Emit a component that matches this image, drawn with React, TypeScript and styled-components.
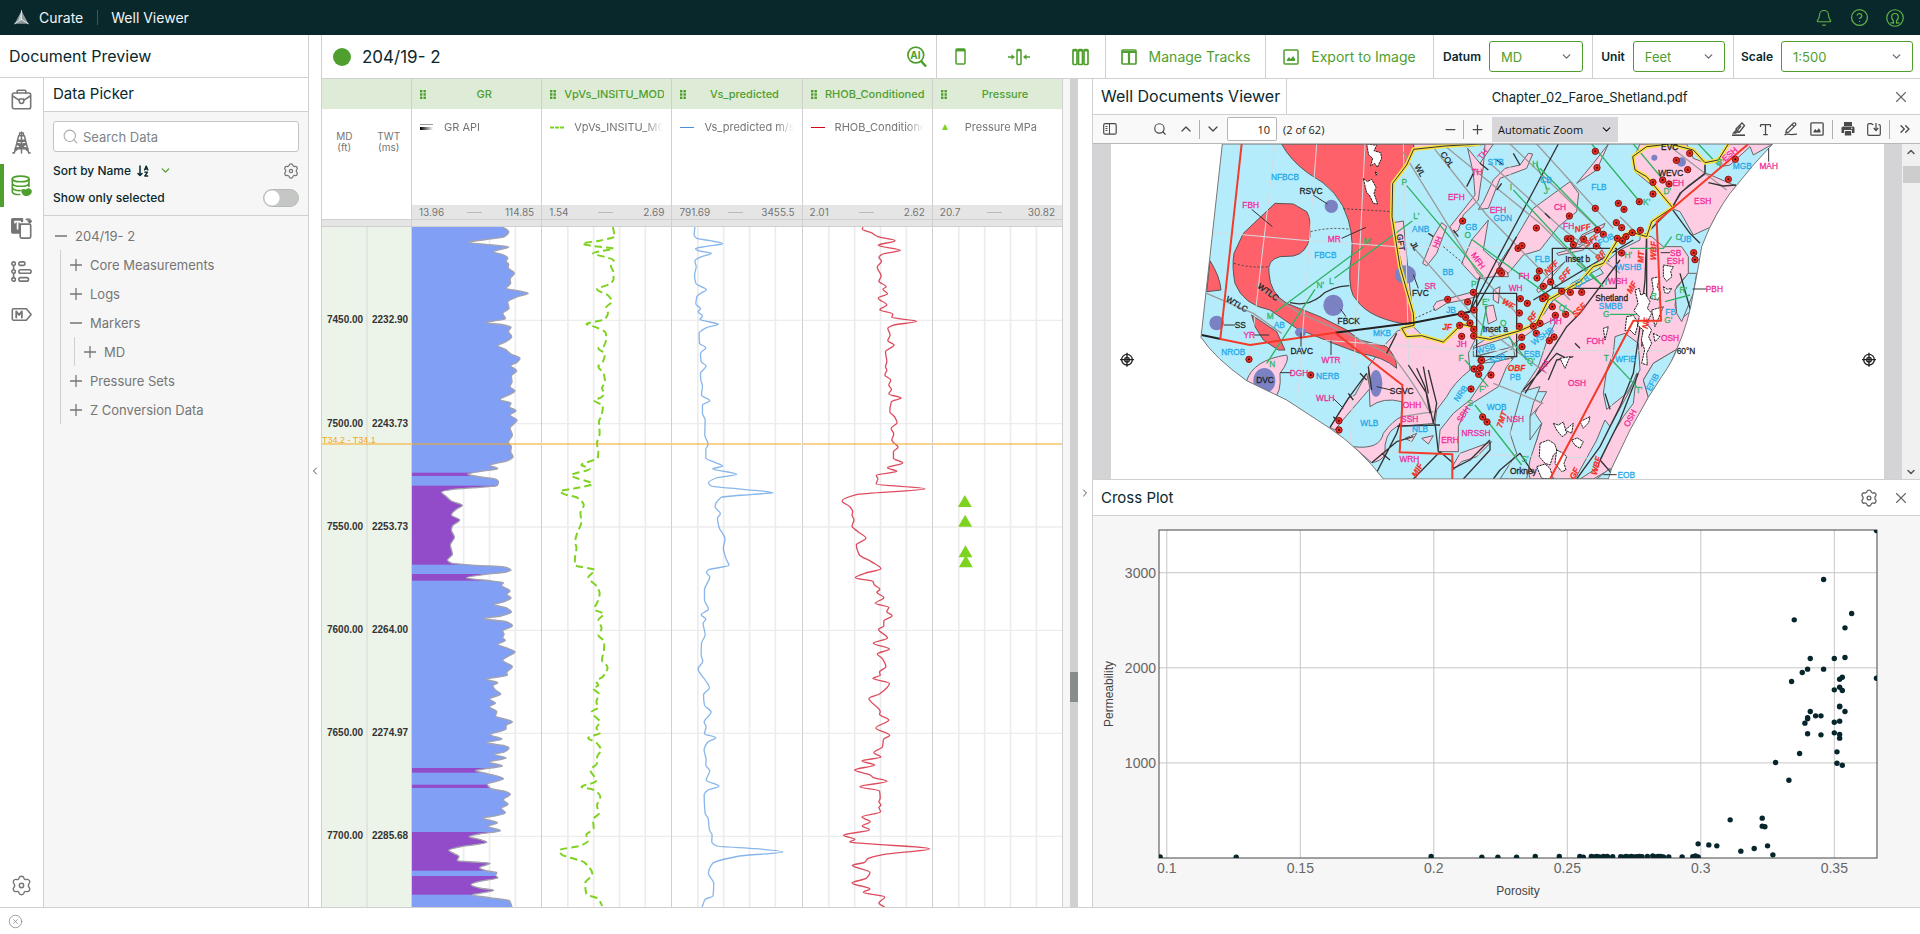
import React from "react";
import styled, { createGlobalStyle, css } from "styled-components";
import { Search, ChevronDown, ChevronUp, ChevronLeft, ChevronRight, ChevronsRight, Plus, Minus, X, Bell, CircleHelp, CircleX, Type } from "lucide-react";

const c = {
  dark: "#09282c", green: "#4f9f2f", line: "#d0d0d0", grey: "#757575", panel: "#f6f6f6",
  pale: "#deebd6", scale: "#e5e5e5", depth: "#ecf4e9",
};

const Global = createGlobalStyle`
  * { box-sizing: border-box; }
  body { margin: 0; font-family: Inter, "Open Sans", sans-serif; color: ${c.dark}; background: #fff; }
  button { font: inherit; color: inherit; background: none; border: 0; padding: 0; cursor: pointer; display: inline-flex; align-items: center; justify-content: center; }
  input, select { font: inherit; color: inherit; }
  h1, h2, p, ul { margin: 0; padding: 0; font-weight: 400; }
  ul { list-style: none; }
  svg { display: block; }
`;

const Shell = styled.div`display: flex; flex-direction: column; height: 100vh; overflow: hidden;`;
const TopBar = styled.header`
  flex: 0 0 35px; display: flex; align-items: center; background: ${c.dark}; color: #f2f5f5; font-size: 14px; padding: 0 16px 0 14px;
`;
const Brand = styled.a`display: flex; align-items: center; gap: 10px; color: inherit; text-decoration: none; padding-right: 14px; border-right: 1px solid #4b5254; line-height: 14px;`;
const AppName = styled.span`padding-left: 13px; flex: 1;`;
const TopActions = styled.div`display: flex; gap: 17px; color: #62b345;`;
const Body = styled.div`flex: 1; min-height: 0; display: flex;`;
const Footer = styled.footer`flex: 0 0 27px; border-top: 1px solid ${c.line}; display: flex; align-items: center; padding-left: 8px; color: #8a8a8a;`;

const LeftPane = styled.aside`flex: 0 0 309px; min-width: 0; border-right: 1px solid ${c.line}; display: flex; flex-direction: column;`;
const PaneTitle = styled.h1`height: 43px; line-height: 42px; padding-left: 9px; font-size: 16px; border-bottom: 1px solid ${c.line};`;
const LeftBody = styled.div`flex: 1; display: flex; min-height: 0;`;
const Rail = styled.nav`flex: 0 0 44px; border-right: 1px solid ${c.line}; display: flex; flex-direction: column;`;
const RailButton = styled.button<{ $active?: boolean; $end?: boolean }>`
  height: 43px; color: ${p => (p.$active ? c.green : c.grey)};
  box-shadow: ${p => (p.$active ? `inset 4px 0 ${c.green}` : "none")};
  ${p => p.$end && css`margin-top: auto;`}
`;
const Picker = styled.section`flex: 1; min-width: 0; background: ${c.panel}; display: flex; flex-direction: column;`;
const PickerTitle = styled.h2`flex: 0 0 34px; background: #fff; line-height: 32px; padding-left: 9px; font-size: 15px; border-bottom: 1px solid ${c.line};`;
const PickerTools = styled.div`padding: 9px 9px 4px; border-bottom: 1px solid ${c.line};`;
const SearchBox = styled.label`
  display: flex; align-items: center; gap: 4px; height: 31px; padding: 0 8px; margin-bottom: 5px; border: 1px solid #c4c4c4; border-radius: 3px; background: #fff; color: #aaa;
  input { border: 0; outline: 0; flex: 1; width: 0; min-width: 0; font-size: 13px; padding: 0; color: ${c.grey}; background: none; }
  input::placeholder { color: #7c8488; opacity: 1; }
`;
const ToolRow = styled.div`display: flex; align-items: center; justify-content: space-between; height: 27px; font-size: 12px; font-weight: 500;`;
const SortButton = styled.button`gap: 6px; font-weight: 500; svg:last-child { margin-left: 4px; color: ${c.green}; }`;
const GearButton = styled.button`color: ${c.grey};`;
const Toggle = styled.label`
  display: flex; flex: 1; align-items: center; justify-content: space-between;
  input { appearance: none; margin: 0; width: 36px; height: 18px; border-radius: 9px; border: 1px solid #b8bab9; background: radial-gradient(circle at 8px 8px, #fff 7px, #c5c7c5 8px); }
`;
const Tree = styled.ul`padding-top: 5px; color: ${c.grey}; font-size: 13px;`;
const Branch = styled.ul<{ $indent: number }>`margin-left: ${p => p.$indent}px; border-left: 1px solid ${c.line};`;
const TreeRow = styled.button<{ $root?: boolean }>`display: flex; gap: 8px; height: 29px; padding-left: ${p => (p.$root ? 11 : 9)}px; svg { stroke-width: 1.5; }`;

const Gutter = styled.button<{ $w: number }>`flex: 0 0 ${p => p.$w}px; color: #555; background: #fff; height: 100%;`;
const Main = styled.main`flex: 1; min-width: 0; border-left: 1px solid ${c.line}; display: flex; flex-direction: column;`;
const Toolbar = styled.div`flex: 0 0 44px; display: flex; border-bottom: 1px solid ${c.line}; color: ${c.green};`;
const WellName = styled.h1`display: flex; align-items: center; gap: 11px; flex: 1; padding-left: 11px; font-size: 17px; color: ${c.dark};`;
const WellDot = styled.span`width: 18px; height: 18px; border-radius: 50%; background: ${c.green};`;
const ToolCell = styled.div<{ $w?: number; $plain?: boolean; $spread?: boolean }>`
  display: flex; align-items: center; justify-content: space-evenly; ${p => p.$w && `width: ${p.$w}px;`}
  ${p => p.$spread && css`justify-content: space-between; padding: 0 16px 0 18px;`}
  border-left: ${p => (p.$plain ? "0" : `1px solid ${c.line}`)};
  > button { gap: 12px; font-size: 14px; height: 100%; white-space: nowrap; }
`;
const Field = styled.label<{ $w: number }>`
  display: flex; align-items: center; gap: 8px; position: relative; font-size: 12px; font-weight: 600; color: ${c.dark};
  select { appearance: none; width: ${p => p.$w}px; height: 31px; border: 1px solid ${c.green}; border-radius: 3px; background: #fff; padding: 0 11px; font-size: 13px; font-weight: 400; color: ${c.green}; }
  svg { position: absolute; right: 10px; color: #666f7d; pointer-events: none; }
`;

const Workspace = styled.div`flex: 1; min-height: 0; display: grid; grid-template-columns: 756fr 14px 828fr; grid-template-rows: minmax(0, 1fr);`;
const TracksPane = styled.section`display: flex; min-width: 0;`;
const Track = styled.div<{ $depth?: boolean }>`
  ${p => (p.$depth ? css`flex: 0 0 90px;` : css`flex: 1 1 0;`)}
  min-width: 0; display: flex; flex-direction: column; border-right: 1px solid ${c.line};
`;
const TrackHead = styled.div`
  flex: 0 0 30px; display: flex; align-items: center; gap: 8px; background: ${c.pale}; color: ${c.green}; padding: 0 7px 0 8px; font-size: 11px; font-weight: 500;
  span { flex: 1; text-align: center; overflow: hidden; white-space: nowrap; }
`;
const Legend = styled.div`
  flex: 0 0 96px; display: flex; align-items: flex-start; gap: 10px; padding: 9px 8px 0; font-size: 11px; line-height: 18px; color: ${c.grey};
  svg { flex: none; }
  span { overflow: hidden; white-space: nowrap; flex: 1; mask-image: linear-gradient(90deg, #000 80%, transparent); }
`;
const Range = styled.div`flex: 0 0 14px; display: flex; align-items: center; justify-content: space-between; background: ${c.scale}; color: ${c.grey}; font-size: 10px; padding: 0 7px; i { width: 15px; border-top: 1px solid #b9b9b9; }`;
const Band = styled.div`flex: 0 0 8px; background: ${c.scale}; border: solid ${c.line}; border-width: 1px 0;`;
const DepthHead = styled.div`flex: 0 0 110px; display: flex; padding-top: 22px; text-align: center; font-size: 10px; line-height: 11px; color: ${c.grey}; span { flex: 1; white-space: pre-line; }`;
const Plot = styled.svg`flex: 1 1 0; min-height: 0; width: 100%;`;
const DepthPlot = styled(Plot)`background: ${c.depth}; font: 700 10px "Liberation Sans", sans-serif;`;
const Strip = styled.div`flex: 0 0 7px; background: #f7f7f7;`;
const ScrollTrack = styled.div`flex: 0 0 8px; background: #d0d0d0; display: flex; flex-direction: column; &::before { content: ""; flex: 593; } i { flex: 0 0 30px; background: #878d8d; } &::after { content: ""; flex: 205; }`;

const RightPane = styled.section`min-width: 0; border-left: 1px solid ${c.line}; display: flex; flex-direction: column;`;
const PanelHead = styled.div`flex: 0 0 36px; display: flex; align-items: center; border-bottom: 1px solid ${c.line}; font-size: 15px; padding-right: 10px; background: #fff; color: ${c.dark}; button { color: #666; }`;
const DocTab = styled.h2`align-self: stretch; line-height: 34px; font-size: 16px; padding: 0 6px 0 8px; border-right: 1px solid ${c.line};`;
const PlotTitle = styled.h2`flex: 1; font-size: 15px; padding-left: 8px;`;
const FileName = styled.p`flex: 1; text-align: center; font-size: 13px;`;
const CrossHead = styled(PanelHead)`flex: 0 0 37px; border-top: 1px solid ${c.line};`;
const HeadActions = styled.div`display: flex; gap: 14px;`;
const PdfBar = styled.div`flex: 0 0 29px; display: flex; align-items: center; background: #f9f9fa; border-bottom: 1px solid #b8b8b8; color: #4a4a4a; font: 11px "Open Sans", sans-serif; padding: 0 2px 0 4px;`;
const PdfButton = styled.button`width: 26px; height: 26px;`;
const PdfSep = styled.i<{ $wide?: boolean }>`width: 1px; height: 19px; background: #b0b0b0; margin: 0 ${p => (p.$wide ? 2 : 0)}px;`;
const PdfGap = styled.span`width: 24px;`;
const PdfGroup = styled.div<{ $grow?: number; $end?: boolean }>`
  display: flex; align-items: center;
  ${p => p.$grow && css`flex: ${p.$grow} 1 0;`}
  ${p => p.$end && css`justify-content: flex-end;`}
`;
const PageInput = styled.input`width: 50px; height: 24px; text-align: right; padding: 0 6px; border: 1px solid #b5b5b5; border-radius: 2px; background: #fff; color: #222; margin: 0 6px 0 1px;`;
const PageCount = styled.span`color: #222;`;
const ZoomField = styled.label`position: relative; display: flex; align-items: center; margin-left: 2px; color: #111; select { appearance: none; width: 126px; height: 25px; border: 0; background: #d7d7db; padding: 0 6px; } svg { position: absolute; right: 5px; pointer-events: none; }`;
const Viewport = styled.div`flex: 335 1 0; min-height: 0; display: flex; background: #d4d4d7; padding-left: 18px;`;
const Page = styled.div`flex: 1; min-width: 0; background: #fff; margin-right: 18px; svg { width: 100%; height: 100%; }`;
const PageScroll = styled.div`flex: 0 0 18px; background: #f0f0f0; color: #555; display: flex; flex-direction: column; align-items: center; justify-content: space-between; i { width: 17px; height: 17px; background: #cdcdcd; margin: 7px 0 auto; }  button { height: 15px; }`;
const CrossPlot = styled.div`flex: 391 1 0; min-height: 0; background: ${c.panel}; svg { width: 100%; height: 100%; font-family: "Liberation Sans", sans-serif; }`;

/* ---------- icons ---------- */
const Ico = ({ s = 21, w = 1.5, children, vb = 24 }: { s?: number; w?: number; vb?: number; children: React.ReactNode }) => (
  <svg width={s} height={s} viewBox={`0 0 ${vb} ${vb}`} fill="none" stroke="currentColor" strokeWidth={w} strokeLinejoin="round" strokeLinecap="round">{children}</svg>
);
const Gear = ({ s = 15 }: { s?: number }) => (
  <Ico s={s} w={s > 18 ? 1.6 : 1.8}><path d="M9.3 3.200C9.800.8 14.200.8 14.700 3.200c.3 1.700 1.800 2.500 3.400 1.900 2.300-.8 4.500 3 2.700 4.600-1.300 1.200-1.300 3.400 0 4.600 1.800 1.600-.4 5.400-2.700 4.600-1.600-.6-3.100.2-3.400 1.900-.5 2.400-4.900 2.400-5.400 0-.3-1.700-1.800-2.500-3.400-1.900-2.300.8-4.500-3-2.700-4.600 1.300-1.200 1.300-3.400 0-4.600-1.800-1.600.4-5.400 2.700-4.600 1.600.6 3.100-.2 3.400-1.900z" /><circle cx="12" cy="12" r="2.500" /></Ico>
);
const Briefcase = () => <Ico w={1.8}><rect x="1.500" y="4.500" width="21" height="18" rx="2" /><path d="M7 4.500V2.500a1 1 0 0 1 1-1h8a1 1 0 0 1 1 1v2M2 8l7.500 5M22 8l-7.500 5" /><path d="M9.500 11.500h5v2.500a2.500 2.500 0 0 1-5 0z" /></Ico>;
const Derrick = () => <Ico s={23} w={1.5}><path d="M9 5 4.500 23M15 5l4.500 18M9 5h6M10 5V2h4v3M12 1v22M8 9.500h8M7 14h10M8 9.500l9 4.500M16 9.500 7 14l11 4.500M17 14 6 18.500M3 23l9-8 9 8M5 18.500h14" /></Ico>;
const Database = () => <Ico w={1.900}><ellipse cx="11" cy="4.500" rx="9.500" ry="3.200" /><path d="M1.500 4.500v14.500c0 1.800 3.500 3.200 8.500 3.300M20.500 4.500V13M1.500 9.500c1 4.500 18 4.500 19 0M1.500 14.500c.8 2.500 5 3.300 9 3.300" /><path fill="currentColor" d="M12.500 17.500c2-1.500 4 0 4.800.6.800-2.600 4-2.800 5.200-.600 1 2.200-.5 5-4.700 5.700-3 .2-5-2.700-5.300-5.700z" /></Ico>;
const Template = () => <Ico w={1.900}><path d="M10 17H2a1 1 0 0 1-1-1V2a1 1 0 0 1 1-1h11v3h-2.500v13z" fill="currentColor" /><path d="M4.500 5.500V4h6v1.500M7.500 4v8.500" stroke="#fff" /><rect x="10.500" y="7" width="12" height="16" rx="1.500" fill="#fff" /><path d="M17.500 1.500h4V5m-1.800-1.500L21.500 5.200 23.200 3.500" /></Ico>;
const ListNodes = () => <Ico w={1.800}><path d="M3 5.500v4M3 14.500v4.500" /><circle cx="3" cy="3" r="2" /><circle cx="3" cy="12" r="2" /><circle cx="3" cy="21" r="2" /><rect x="9" y="1" width="7" height="4" rx="2" /><rect x="9" y="10" width="14" height="4" rx="2" /><rect x="9" y="19" width="11" height="4" rx="2" /></Ico>;
const TagM = () => <Ico w={1.800}><path d="M3 5.500h14.500L23 12l-5.500 6.500H3A1.500 1.500 0 0 1 1.500 17V7A1.500 1.500 0 0 1 3 5.500z" /><path d="M6 15.500v-7l3.200 4 3.200-4v7" strokeWidth="2.100" /></Ico>;
const Logo = () => <Ico s={15} w={1}><path d="M12 1 1 22h22z" fill="#8d9c9e" stroke="none" /><path d="M12 1v14M12 15 1 22M12 15l11 7" stroke="#e9eeee" strokeWidth="1.500" /><path d="m12 1-5 17 5-4z" fill="#c9d1d2" stroke="none" /></Ico>;
const SortAZ = () => <Ico s={12} vb={12} w={1.500}><path d="M3 1v9.500M1 8.500l2 2 2-2" /><path d="M7.500 5 9.200 1l1.700 4M8 4h2.500M7.800 7.200h2.700l-2.700 3.800h2.900" strokeWidth="1.300" /></Ico>;
const AiSearch = () => (
  <svg width="20" height="22" viewBox="0 0 20 22" fill="none" stroke="currentColor" strokeWidth="1.700"><circle cx="8.800" cy="9" r="7.900" /><path d="m14 15 5 5.500" strokeWidth="2.600" /><text x="8.500" y="12.500" fontSize="10" fontWeight="700" fill="currentColor" stroke="none" textAnchor="middle">AI</text></svg>
);
const SingleTrack = () => <svg width="11" height="17" fill="none" stroke="currentColor" strokeWidth="1.500"><rect x="1" y="1" width="9" height="15" rx="1" /><path d="M1 2.200h9" strokeWidth="2.500" /></svg>;
const FitTrack = () => <svg width="22" height="18" fill="none" stroke="currentColor" strokeWidth="1.500"><rect x="9" y="1.500" width="4" height="15" rx="1" /><path d="M9 2.500h4M0 9h6M22 9h-6" /><path d="M3.500 6.200v5.600L7 9zM18.500 6.200v5.600L15 9z" fill="currentColor" stroke="none" /></svg>;
const MultiTrack = () => <svg width="17" height="18" fill="none" stroke="currentColor" strokeWidth="1.700">{[1, 6.500, 12].map(x => <g key={x}><rect x={x} y="1.500" width="4" height="15" rx="1" /><path d={`M${x} 2.500h4`} strokeWidth="2" /></g>)}</svg>;
const TableIcon = () => <svg width="16" height="16" fill="none" stroke="currentColor" strokeWidth="1.700"><rect x="1" y="1" width="14" height="14" rx="1" /><path d="M1 3h14M8 3v12" strokeWidth="2.200" /></svg>;
const PictureIcon = ({ s = 16 }: { s?: number }) => <svg width={s} height={s} viewBox="0 0 16 16" fill="none" stroke="currentColor" strokeWidth="1.500"><rect x="1" y="1" width="14" height="14" rx="1" /><path d="M4 12v-1.500l2-2.500 1.700 2L10.200 7 12 10v2z" fill="currentColor" stroke="none" /></svg>;
const UserIcon = () => <Ico s={18} w={1.600}><circle cx="12" cy="12" r="11" /><path d="M9 18.500H6.500M15 18.500h2.500M10 19v-3C6 12.500 7 6 12 6s6 6.500 2 10v3" /></Ico>;
const Grip = () => <svg width="6" height="9" fill={c.green}>{[0, 3.500].map(x => [0, 3.300, 6.600].map(y => <rect key={`${x}${y}`} x={x} y={y} width="2.400" height="2.400" />))}</svg>;
const SidebarIcon = () => <svg width="14" height="12" fill="none" stroke="currentColor"><rect x=".7" y=".7" width="12.500" height="10.500" rx="1.500" strokeWidth="1.200" /><path d="M6.500 1v10" /><path d="M2.500 3.500h2M2.500 5.500h2M2.500 7.500h2" /></svg>;
const Highlighter = () => <svg width="14" height="14" viewBox="0 0 14 14" fill="none" stroke="currentColor" strokeWidth="1.300"><path d="M0 13.200h13" strokeWidth="1.600" /><path d="m4 7 6-6 2.500 2.500-5 6.500-3.500.2zM4 7l3.300 3.300M3.500 9 1.500 11.200h3M6 7.500 9 4" /></svg>;
const Signature = () => <svg width="14" height="14" viewBox="0 0 14 14" fill="none" stroke="currentColor" strokeWidth="1.200"><path d="m2.500 8 7-7c1.500-.8 2.900.8 2 2.200l-7 7-2.700.5zM.5 13c2-1.500 4-.8 6-.5s4-.3 6.500-.3M8 2.500 10 4.500" /></svg>;
const PrintIcon = () => <svg width="14" height="14" fill="currentColor"><path d="M3 0h8v4H3zM2 4.500h10a1.500 1.500 0 0 1 1.500 1.500v5H11V8H3v3H.5V6A1.500 1.500 0 0 1 2 4.500zM3.800 9h6.400v4.500H3.800z" /><circle cx="10.800" cy="6.300" r=".7" fill="#fff" /></svg>;
const SaveIcon = () => <svg width="14" height="13" fill="none" stroke="currentColor" strokeWidth="1.200"><path d="M6.500 1.500H5.500L4.500.7H2A1.300 1.300 0 0 0 .7 2v9A1.300 1.300 0 0 0 2 12.300h10a1.300 1.300 0 0 0 1.300-1.300V3A1.300 1.300 0 0 0 12 1.700h-.5M9 0v7M6.700 5 9 7.500 11.300 5" /></svg>;

/* ---------- well log curves ---------- */
type Pt = [number, number];
/* Builds pairs from a flat "x,y x,y" listing. */
const pts = (s: string): Pt[] => s.trim().split(/\s+/).map(p => p.split(",").map(Number) as Pt);

/* Monotone cubic interpolation along depth (y). */
function smooth(p: Pt[]): string {
  const n = p.length, h: number[] = [], s: number[] = [], m: number[] = [];
  for (let i = 0; i < n - 1; i++) { h.push(p[i + 1][1] - p[i][1]); s.push((p[i + 1][0] - p[i][0]) / h[i]); }
  for (let i = 0; i < n; i++) {
    if (i === 0) m.push(s[0]);
    else if (i === n - 1) m.push(s[n - 2]);
    else m.push(s[i - 1] * s[i] <= 0 ? 0 : (2 * s[i - 1] * s[i]) / (s[i - 1] + s[i]));
  }
  let d = `M${p[0]}`;
  for (let i = 0; i < n - 1; i++) d += `C${p[i][0] + (m[i] * h[i]) / 3},${p[i][1] + h[i] / 3} ${p[i + 1][0] - (m[i + 1] * h[i]) / 3},${p[i + 1][1] - h[i] / 3} ${p[i + 1]}`;
  return d;
}

const GR = pts(`580,21 598,35 585,50 520,60 476,67 540,74 598,81 575,88 552,95 580,104 595,114 590,124 598,133 596,142 615,160 602,178 604,190 590,205 625,212 657,220 625,230 595,246 599,265 580,280 588,296 560,302 527,308 580,314 605,322 597,334 607,350 590,365 565,377 588,388 605,402 632,415 622,428 604,437 622,452 606,468 608,485 602,500 617,513 600,524 572,539 605,549 600,560 620,572 602,585 623,600 602,625 609,645 597,667 606,680 604,695 611,710 595,722 560,730 540,736 565,746 530,752 490,758 474,763 510,770 560,778 567,785 563,797 510,802 430,808 395,816 408,828 425,843 458,856 440,868 425,885 450,900 428,918 425,930 434,952 422,975 428,1003 413,1020 425,1029 500,1036 580,1040 605,1050 590,1056 530,1063 470,1074 520,1080 582,1088 576,1096 602,1113 592,1123 605,1134 585,1145 554,1154 590,1163 606,1176 575,1188 522,1196 590,1205 609,1217 580,1233 584,1243 580,1253 588,1261 565,1273 595,1285 617,1296 598,1308 580,1321 609,1340 592,1358 594,1366 560,1372 530,1378 565,1388 550,1397 557,1409 574,1422 540,1437 558,1449 540,1460 562,1475 558,1488 590,1498 609,1505 590,1517 590,1527 543,1544 578,1557 532,1568 585,1577 599,1583 585,1596 554,1603 590,1614 540,1626 579,1638 530,1646 498,1652 530,1660 582,1676 560,1684 533,1692 545,1706 590,1715 603,1722 582,1740 596,1753 575,1765 588,1778 550,1789 520,1794 564,1808 535,1819 573,1832 510,1842 478,1850 510,1858 532,1867 450,1881 417,1891 432,1900 448,1910 442,1922 510,1927 542,1930 510,1943 530,1952 562,1958 558,1966 565,1973 510,1984 484,1994 510,2004 553,2011 510,2020 488,2024 540,2033 600,2042 608,2061`);
const VP = pts(`910,21 914,40 918,48 870,62 818,71 850,78 912,86 880,92 850,100 890,112 912,120 904,138 911,155 912,178 900,192 862,208 895,226 907,245 890,262 895,280 885,298 830,312 860,322 888,338 890,355 883,378 866,385 886,402 880,425 866,440 882,460 886,485 877,505 884,520 875,532 853,541 880,558 876,585 868,605 870,640 862,670 866,695 864,714 815,735 840,746 784,766 848,792 800,804 750,815 765,823 802,833 822,855 812,880 815,905 802,940 796,965 800,985 796,1010 795,1035 855,1050 836,1072 862,1100 870,1120 866,1140 854,1168 883,1182 866,1200 876,1225 866,1245 884,1265 883,1290 877,1320 894,1342 880,1370 860,1384 866,1396 850,1405 868,1422 860,1446 866,1462 846,1476 871,1507 860,1524 872,1538 835,1554 860,1568 874,1590 862,1612 862,1630 842,1650 860,1682 852,1688 815,1700 850,1709 872,1730 862,1757 868,1780 850,1798 852,1825 830,1845 835,1862 815,1876 748,1891 755,1903 825,1928 848,1962 826,1990 830,2022 865,2036 878,2058`);
const VS = pts(`1155,21 1153,45 1160,55 1200,62 1239,71 1190,79 1157,86 1165,92 1205,100 1175,110 1155,123 1159,140 1154,165 1158,190 1175,200 1190,209 1175,218 1161,230 1158,252 1172,266 1165,275 1178,288 1170,298 1200,306 1226,313 1190,323 1168,340 1169,370 1188,383 1172,400 1174,425 1189,438 1172,460 1173,480 1178,497 1175,525 1200,542 1178,555 1178,580 1186,600 1185,645 1195,673 1188,688 1188,714 1215,727 1239,738 1209,747 1255,756 1281,763 1220,774 1196,788 1205,798 1300,808 1391,818 1330,823 1235,832 1216,860 1232,881 1223,895 1228,922 1246,957 1241,985 1251,1020 1258,1036 1195,1050 1190,1058 1200,1070 1184,1110 1184,1140 1196,1168 1174,1184 1188,1197 1180,1210 1186,1245 1175,1270 1174,1305 1179,1323 1165,1347 1186,1380 1199,1403 1181,1425 1184,1455 1204,1476 1183,1506 1189,1520 1184,1541 1218,1553 1194,1566 1183,1590 1189,1620 1188,1635 1200,1653 1189,1680 1228,1699 1195,1710 1183,1725 1186,1780 1195,1795 1199,1830 1207,1845 1206,1865 1222,1878 1340,1886 1421,1896 1290,1908 1208,1931 1196,1960 1212,1990 1210,2028 1186,2038 1177,2061`);
const RHOB = pts(`490,21 488,28 515,38 535,50 587,62 536,76 603,91 550,102 538,112 546,124 533,142 545,168 538,184 560,200 550,208 564,221 536,234 562,255 541,269 580,282 577,292 652,304 580,316 565,325 572,345 565,362 584,375 558,395 562,425 558,440 562,450 556,465 574,480 568,495 576,508 568,522 605,534 576,545 571,575 585,590 593,608 575,625 583,642 577,660 596,682 582,695 582,715 610,729 564,743 592,754 530,766 535,776 530,792 677,806 470,824 427,843 450,860 459,875 457,885 463,900 457,918 475,935 499,955 470,975 478,1003 515,1025 544,1046 495,1060 467,1073 520,1084 524,1094 541,1108 532,1117 553,1133 527,1150 568,1162 562,1175 578,1187 553,1203 553,1218 537,1228 564,1254 521,1270 570,1287 533,1302 548,1315 559,1340 540,1356 542,1366 520,1375 570,1390 540,1422 508,1435 542,1475 540,1483 568,1500 529,1524 571,1546 552,1558 549,1580 523,1598 544,1611 487,1623 525,1635 465,1650 512,1665 520,1672 563,1684 481,1700 540,1713 542,1735 538,1745 544,1755 538,1762 543,1775 487,1791 512,1805 488,1818 510,1829 431,1846 466,1858 450,1866 500,1871 691,1886 550,1904 505,1916 495,1927 458,1936 511,1957 500,1975 457,1989 511,2007 491,2017 556,2031 538,2049 555,2061`);

const GRID_Y = [301, 611, 921, 1231, 1540, 1849];
const MARKER_Y = 672;
const Grid = ({ x }: { x: number }) => (
  <g stroke="#ececec" strokeWidth="5">
    {[1, 2, 3, 4].map(i => <path key={i} d={`M${x + i * 78} 21V2061`} />)}
    {GRID_Y.map(y => <path key={y} d={`M${x} ${y}h390`} strokeWidth="4" />)}
  </g>
);
const TrackPlot = ({ x, children }: { x: number; children: React.ReactNode }) => (
  <Plot viewBox={`${x} 21 390 2040`} preserveAspectRatio="none">
    <Grid x={x} />
    {children}
    <path d={`M${x} ${MARKER_Y}h390`} stroke="#f5a623" strokeWidth="6" opacity=".5" />
  </Plot>
);
const SAND = [[758, 768], [797, 1034], [1062, 1082], [1644, 1658], [1694, 1704], [1836, 1952], [1968, 2024]];
const GrFill = () => (
  <>
    <clipPath id="gr"><path d={`${smooth(GR)}L306,2061L306,21Z`} /></clipPath>
    <g clipPath="url(#gr)">
      <rect x="306" y="21" width="390" height="2040" fill="#829ff6" />
      {SAND.map(([a, b]) => <rect key={a} x="306" y={a} width="390" height={b - a} fill="#924cca" />)}
    </g>
    <path d={smooth(GR)} fill="none" stroke="#a3a3ad" strokeWidth="4" />
  </>
);
const Curve = ({ p, color, dash, o = 1, w = 4 }: { p: Pt[]; color: string; dash?: string; o?: number; w?: number }) => (
  <path d={smooth(p)} fill="none" stroke={color} strokeWidth={w} strokeDasharray={dash} opacity={o} />
);

const lineKey = (color: string, dash?: string) => <svg width="14" height="18"><path d="M0 9.500h14" stroke={color} strokeWidth={dash ? 2 : 1} strokeDasharray={dash} /></svg>;
const TRACKS = [
  { name: "GR", legend: "GR API", lo: "13.96", hi: "114.85", key: <svg width="14" height="18"><defs><linearGradient id="k"><stop stopColor="#000" /><stop offset="1" stopColor="#fff" /></linearGradient></defs><path d="M0 6.500h13" stroke="#999" /><rect y="9" width="13" height="3" fill="url(#k)" /></svg>, plot: <TrackPlot x={306}><GrFill /></TrackPlot> },
  { name: "VpVs_INSITU_MODEL", legend: "VpVs_INSITU_MODEL", lo: "1.54", hi: "2.69", key: lineKey("#7ed321", "4 1"), plot: <TrackPlot x={696}><Curve p={VP} color="#7ed321" dash="22 12" w={6} /></TrackPlot> },
  { name: "Vs_predicted", legend: "Vs_predicted m/s", lo: "791.69", hi: "3455.5", key: lineKey("#4a90e2"), plot: <TrackPlot x={1086}><Curve p={VS} color="#4a90e2" o={0.65} /></TrackPlot> },
  { name: "RHOB_Conditioned", legend: "RHOB_Conditioned", lo: "2.01", hi: "2.62", key: lineKey("#d0021b"), plot: <TrackPlot x={309}><Curve p={RHOB} color="#d0021b" o={0.7} /></TrackPlot> },
  { name: "Pressure", legend: "Pressure MPa", lo: "20.7", hi: "30.82", key: <svg width="14" height="18"><path d="m4 6 3 6H1z" fill="#7ed321" /></svg>, plot: <TrackPlot x={699}>{[[795, 861], [796, 920], [797, 1012], [798, 1042]].map(([x, y]) => <path key={y} d={`M${x} ${y - 36}l21 36h-42z`} fill="#7ed321" />)}</TrackPlot> },
];
const DEPTHS = [["7450.00", "2232.90"], ["7500.00", "2243.73"], ["7550.00", "2253.73"], ["7600.00", "2264.00"], ["7650.00", "2274.97"], ["7700.00", "2285.68"]];
const pct = (y: number) => `${((y - 21) / 2040) * 100}%`;

/* ---------- cross plot ---------- */
const SAMPLES = pts(`346,2929 356.5,2571 335,2504 354,2420 341,2098 350,2098 354,2108 340,1986 346,1986 338,1950 334,1856 353,1901 352,1880 365.8,1890 352,1796 350,1768 353,1761 352,1597 352,1590 341,1540 354,1540 343,1495 345,1495 340,1474 340,1463 339,1418 350,1428 352,1439 340,1306 345,1295 350,1316 352,1299 352,1260 351,1116 337,1099 328,1004 351,997 353,976 333,818 311,401 323,419 323,335 324,328 299,149 303,138 306,128 320,100 325,128 315,72 327,33 365.8,3444 97.500,10 126,8 199,15 218,8 224,8 231,8 238,15 247,15 254.700,15 256,9 259,17 260,12 261,15 262,10 264,12 265,15 267,14 270,14 272,16 273,12 274,15 276,13 278,14 280,15 282,22 284,15 286,12 288,12 293,12 297,14 298,22 299,10 283,12 285,16 275,11 277,15 263.500,15 271,9`);
const px = (p: number) => 73.8 + (p - 100) * 2.670;
const py = (k: number) => 342 - k * 0.0951;
const CrossPlotChart = () => (
  <svg viewBox="0 0 827 391">
    <clipPath id="frame"><rect x="66" y="14" width="718" height="328" /></clipPath>
    <rect x="66" y="14" width="718" height="328" fill="#fff" />
    <g stroke="#c6c6c6" fill="none">
      {[100, 150, 200, 250, 300, 350].map(v => <path key={v} d={`M${px(v)} 14V342`} />)}
      {[1000, 2000, 3000].map(v => <path key={v} d={`M66 ${py(v)}H784`} />)}
    </g>
    <rect x="66" y="14" width="718" height="328" fill="none" stroke="#444" />
    <g clipPath="url(#frame)" fill="#06262b">{SAMPLES.map(([p, k], i) => <circle key={i} cx={px(p)} cy={py(k)} r="2.700" />)}</g>
    <g fontSize="14" fill="#666">
      {[100, 150, 200, 250, 300, 350].map(v => <text key={v} x={px(v)} y="357" textAnchor="middle">{v / 1000}</text>)}
      {[1000, 2000, 3000].map(v => <text key={v} x="63" y={py(v) + 5} textAnchor="end">{v}</text>)}
    </g>
    <g fontSize="12" fill="#444"><text x="425" y="379" textAnchor="middle">Porosity</text><text transform="translate(20 178) rotate(-90)" textAnchor="middle">Permeability</text></g>
  </svg>
);

/* ---------- geological map ---------- */
const B = "#22a7e8", P = "#f02a96", G = "#2fb463", K = "#222", R = "#f3301f";
type Label = [string, number, number, string, number?];
const LABELS: Label[] = [
  ["NFBCB", 555, 112, B], ["RSVC", 633, 152, K], ["FBH", 452, 194, P], ["MR", 703, 296, P], ["M'", 803, 304, G], ["FBCB", 676, 346, B], ["L", 694, 423, G], ["N'", 661, 436, G],
  ["WTLC", 505, 456, K, 36], ["WTLC", 411, 492, K, 30], ["M", 511, 528, G], ["AB", 538, 555, B], ["SS", 421, 555, K], ["YR", 448, 586, P], ["DAVC", 605, 632, K], ["WTR", 693, 660, P], ["NROB", 400, 637, B],
  ["N", 517, 673, G], ["DGH", 597, 698, P], ["NERB", 683, 709, B], ["DVC", 495, 720, K], ["WLH", 676, 773, P], ["WLB", 808, 849, B], ["SGVC", 905, 754, K], ["OHH", 936, 795, P], ["SSH", 929, 838, P],
  ["NLB", 960, 867, B], ["ERH", 1050, 901, P], ["WRH", 928, 958, P], ["MIF", 952, 990, R, -62], ["NRSSH", 1128, 878, P], ["FBCK", 746, 542, K], ["MKB", 846, 580, B], ["FVC", 961, 460, K], ["SR", 991, 439, P],
  ["JB", 1053, 510, B], ["JF", 1041, 560, R], ["JH", 1085, 612, P], ["BB", 1044, 397, B], ["ANB", 962, 266, B], ["L'", 949, 228, G], ["P", 913, 127, G], ["WL", 960, 91, K, 60], ["COL", 1042, 58, K, 56], ["JL", 945, 318, K, 60],
  ["GFT", 903, 307, K, 82], ["HH", 1012, 306, P, -68], ["EFH", 1069, 172, P], ["TH", 1131, 97, P], ["TH", 1148, 42, P, -50], ["STB", 1187, 67, B], ["EFH", 1194, 211, P], ["GDN", 1208, 235, B], ["GB", 1114, 260, B], ["O", 1103, 286, G],
  ["MFH", 1135, 362, P, 55], ["P'", 1124, 432, G], ["WH", 1247, 443, P], ["E'", 1157, 486, G], ["WF", 1226, 491, R, 30], ["Q", 1210, 549, G], ["Inset a", 1186, 567, K], ["WSB", 1158, 626, B, -15], ["SSB", 1192, 655, B, -15],
  ["F", 1083, 654, G], ["OBF", 1250, 683, R], ["PB", 1246, 712, B], ["F'", 1148, 748, G], ["NRB", 1082, 760, B, -55], ["S", 1111, 790, G], ["SBH", 1090, 822, P, -55], ["WOB", 1190, 802, B], ["7MT", 1205, 838, R, -70], ["NSH", 1246, 836, P],
  ["H", 1306, 73, G], ["CB", 1338, 121, B], ["I", 1233, 140, G], ["J'", 1340, 152, G], ["CH", 1380, 202, P], ["FLB", 1497, 141, B], ["FH", 1406, 258, P], ["NFF", 1448, 264, R, -12], ["SFF", 1475, 300, R, -38], ["FOB", 1518, 298, B, -28],
  ["EVC", 1709, 22, K], ["WEVC", 1712, 100, K], ["EH", 1735, 128, P], ["D'", 1702, 154, G], ["K'", 1640, 185, G], ["B'", 1861, 66, G], ["ESH", 1889, 42, P, -40], ["MGB", 1927, 79, B], ["MAH", 2006, 79, P], ["ESH", 1808, 183, P],
  ["C'", 1738, 290, G], ["UB", 1757, 298, B], ["SB", 1727, 338, P], ["WBF", 1660, 332, R, -88], ["MT", 1622, 351, R, -88], ["ESH", 1726, 364, P], ["RF", 1501, 347, R, -50], ["Inset b", 1433, 357, K], ["FLB", 1327, 357, B],
  ["NFF", 1354, 382, R, -42], ["SFF", 1395, 404, R, -50], ["FH", 1272, 409, P], ["CLB", 1446, 424, B, -35], ["WSHB", 1587, 381, B], ["I'", 1520, 426, G], ["WSH", 1553, 424, P], ["MF", 1595, 442, R, -60], ["Shetland", 1535, 473, K],
  ["SMBB", 1532, 497, B], ["G", 1519, 521, G], ["H'", 1585, 346, G], ["R", 1661, 468, G], ["R'", 1750, 451, G], ["PBH", 1843, 447, P], ["Q'", 1388, 505, G], ["SSF", 1437, 510, R, -45], ["RF", 1297, 530, R, -55], ["HH", 1367, 543, P],
  ["WSHB", 1327, 588, B, -35], ["FOH", 1486, 604, P], ["FB", 1712, 517, B], ["G'", 1705, 541, G], ["OSH", 1710, 594, P], ["NF", 1637, 550, R, -80], ["60°N", 1758, 634, K], ["ESB", 1296, 641, B], ["Q'", 1293, 664, G], ["PH", 1333, 677, P, -60],
  ["T", 1519, 653, G], ["WFIB", 1577, 656, B], ["OSH", 1431, 730, P], ["T'", 1617, 751, G], ["EFIB", 1657, 726, B, -62], ["OSH", 1590, 834, P, -62], ["S'", 1275, 958, G], ["Orkney", 1270, 994, K], ["WBF", 1488, 977, R, -75], ["GF", 1423, 1000, R, -65], ["EOB", 1579, 1004, B],
];
const WELLS = pts(`447,658 632,705 717,842 717,870 1088,243 1043,478 1103,486 1120,457 1122,510 1084,522 1097,532 1110,549 1079,556 1121,568 1085,589 1121,588 1143,661 1122,687 1141,683 1136,703 1173,705 1113,747 1148,831 1161,846 1199,393 1205,400 1486,34 1491,83 1486,205 1555,190 1572,208 1618,185 1549,248 1565,263 1597,278 1621,271 1578,290 1552,295 1567,303 1565,339 1489,318 1492,270 1510,283 1451,298 1402,296 1413,296 1420,314 1408,228 1309,264 1254,325 1266,317 1318,393 1311,414 1330,439 1352,426 1385,454 1411,457 1445,457 1336,470 1328,476 1261,476 1282,490 1258,519 1357,500 1366,526 1397,523 1258,559 1300,559 1320,550 1309,580 1265,592 1266,620 1348,602 1362,591 1729,61 1769,40 1763,89 1688,120 1707,132 1659,127 1659,162 1906,58 1885,118 1781,338 1785,359 1145,661`);
const MEDIAN = "M1140 12 1035 18 941 28 920 75 878 130 876 230 900 380 940 520 942 556 905 565 920 590 965 587 1030 606 1085 553 1120 560 1125 590 1170 598 1260 572 1310 550 1330 510 1345 480 1440 425 1480 380 1510 370 1550 305 1590 275 1640 290 1655 245 1718 203 1640 110 1605 90 1598 50 1640 20 1710 12 1780 30 1815 68 1855 60 1885 12";
const COAST = "M367 12 303 592Q345 655 440 722L560 780 690 865Q780 925 850 1017H1525L1535 985 1590 870 1645 772 1685 710Q1720 660 1730 628 1765 550 1780 460L1795 380 1805 320 1828 265Q1870 180 1908 138L1960 75 2018 12Z";
const Target = ({ x, y }: { x: number; y: number }) => <g stroke="#222" strokeWidth="4" fill="none"><circle cx={x} cy={y} r="16" /><circle cx={x} cy={y} r="7" /><path d={`M${x - 21} ${y}h42M${x} ${y - 21}v42`} /></g>;

const GeoMap = () => (
  <svg viewBox="33 12 2319 1005" preserveAspectRatio="xMidYMin slice" role="img" aria-label="Structural elements map">
    <clipPath id="land"><path d={COAST} /></clipPath>
    <g clipPath="url(#land)" strokeLinejoin="round">
      <rect x="300" y="12" width="1720" height="1005" fill="#b5ecfb" />
      {/* platforms and highs */}
      <g fill="#fecce3" stroke="#666" strokeWidth="3">
        <path d="M893 572 940 560 975 595 1030 606 1085 555 1120 565 1125 600 1105 640 1110 690Q1060 730 1040 770L1010 810 1005 850 890 860Q850 880 855 945 840 965 815 968L760 920Q840 930 850 880 880 840 905 830L905 785Q850 770 810 800L805 680 850 620Z" />
        <path d="M440 722Q460 660 560 645 570 660 540 700 545 760 520 775Z" />
        <path d="M800 700 810 745 720 850 705 870 690 862 745 775 765 765Z" />
        <path d="M941 30 941 12 1160 12 1100 20 1035 18Z" />
        <path d="M880 248 910 243 925 400 940 540 925 520 905 400Z" />
        <path d="M1103 25 1140 70 1180 12 1155 12 1150 80 1145 110 1135 180 1090 225 1075 270 1060 280 1050 260 1090 210 1125 165 1120 100Z" />
        <path d="M1025 248 1040 260 1010 340 980 378 968 370 1000 290Z" />
        <path d="M1085 370 1115 300 1165 240 1150 330 1220 390 1225 410 1180 410 1130 418Z" />
        <path d="M1285 40 1298 42 1280 85 1200 115 1165 205 1135 208 1150 185 1180 120 1215 85 1260 75Z" />
        <path d="M1195 375 1250 290 1300 205 1410 125 1436 160 1430 215 1375 260 1320 330 1270 345 1225 400Z" />
        <path d="M1000 500 1010 485 1110 458 1130 470 1090 480 1040 490 1005 512Z" />
        <path d="M1525 12 1490 90 1430 130 1455 100 1480 70Z" />
        <path d="M1430 310 1445 285 1515 250 1510 262 1455 285 1440 315Z" />
        <path d="M1370 340 1440 320 1480 295 1450 330 1375 346Z" />
        <path d="M1310 450 1335 415 1395 365 1360 405 1340 440 1315 458Z" />
        <path d="M1620 12 1598 60 1605 95 1660 140 1718 200 1760 140 1815 100 1815 68 1780 55 1760 12Z" />
        <path d="M1715 205 1750 150 1820 100 1908 138 1855 215 1830 262 1780 285 1740 215Z" />
        <path d="M1860 50 1885 12 2018 12 1960 45 1950 20 1890 75 1860 80Z" />
        <path d="M1170 590 1260 575 1330 525 1360 480 1480 400 1560 330 1620 300 1620 285 1655 290 1690 320 1745 320 1765 350 1765 400 1730 440 1725 500 1745 535 1790 500 1730 628 1660 670 1630 720 1645 772 1535 985 1480 1017 1290 1017 1280 970 1310 900 1325 850 1305 820 1340 755 1265 755 1315 680 1345 590 1375 530 1300 570 1230 620 1130 650 1120 620Z" />
        <path d="M1190 660 1240 655 1220 680 1195 740 1100 800 1075 860 1075 935 1015 935 1020 870 1060 820 1110 780 1150 720Z" />
        <path d="M1060 975 1080 940 1175 905 1130 950 1085 965 1060 990Z" />
        <path d="M915 895 950 880 935 905ZM965 895 1000 887 985 912Z" />
        <path d="M1155 500 1180 495 1190 540 1165 552ZM1180 450 1200 440 1195 490 1180 480Z" />
        <path d="M1290 770 1325 790 1290 830 1275 900 1250 940 1275 860Z" />
      </g>
      {/* basins over the eastern platform */}
      <g fill="#b5ecfb" stroke="#666" strokeWidth="3">
        <path d="M1545 590 1575 580 1615 610 1620 690 1580 760 1520 808 1510 760 1520 690 1540 640Z" />
        <path d="M1730 628 1660 670 1630 720 1645 772 1690 720Z" />
        <path d="M1725 450 1765 400 1790 400 1780 460 1745 545 1730 520Z" />
        <path d="M1600 790 1570 830 1540 880 1490 985 1440 1017 1425 1017 1490 900 1515 840 1530 860 1590 750 1610 700Z" />
        <path d="M1320 740 1265 755 1230 880 1250 940 1200 1017 1280 1017 1290 960 1310 900 1325 850 1290 900 1290 830 1300 790Z" />
        <path d="M1415 430 1500 385 1510 400 1400 455Z" />
        <path d="M1490 1017 1530 985 1550 1017Z" />
        <path d="M1120 625 1230 590 1240 620 1120 650ZM1140 670 1240 625 1245 650 1190 665Z" />
      </g>
      {/* volcanic ridges */}
      <g fill="#ff616b" stroke="#555" strokeWidth="3">
        <path d="M545 12Q570 60 625 100 720 150 745 240 765 310 750 380 745 460 770 480 810 540 942 556L940 520 895 330 878 240 875 140 920 70 941 25 941 12Z" />
        <path d="M525 190 580 192 620 215Q635 240 630 290 620 340 580 348L540 350Q500 360 507 400 510 460 560 490L660 530 740 570 780 600 860 620Q890 650 890 685 850 650 780 640L700 610 590 565 510 510Q430 495 405 430 395 380 402 340L430 280Z" />
        <path d="M330 362Q360 410 363 450L320 455Z" />
        <path d="M455 525 530 575 555 630 535 630 490 600 465 560Z" />
      </g>
      <g fill="#7b82c4">
        <circle cx="694" cy="199" r="20" /><ellipse cx="916" cy="404" rx="32" ry="28" /><ellipse cx="700" cy="496" rx="30" ry="32" /><circle cx="350" cy="549" r="22" /><ellipse cx="602" cy="577" rx="17" ry="14" /><ellipse cx="493" cy="722" rx="33" ry="38" /><ellipse cx="828" cy="730" rx="19" ry="40" /><circle cx="1744" cy="66" r="14" /><circle cx="1663" cy="53" r="9" />
      </g>
      {/* graticule */}
      <g stroke="#d4dce2" strokeWidth="3" fill="none"><path d="M525 12 445 700M650 12 590 820M795 12 750 930M910 12 935 1017M1230 12V1017M1370 500 1375 1017M1535 600V1017M330 275 600 300 890 320 1300 325M650 600 1140 632 1700 632M850 935 1500 955" /></g>
      {/* lineaments */}
      <g stroke="#9b9b9b" strokeWidth="4" fill="none"><path d="M908 35 1130 395 1250 520M1000 22 1160 225 1410 480M1035 18 1320 250 1480 410M1170 70 1380 260 1560 400M1230 12 1520 290M1310 12 1540 265M930 310 1150 560 1340 700M320 460 460 520 545 580M465 435 600 520 740 580 880 650Q950 740 985 810M1700 12 1880 150M1180 730 1330 790M905 830 1000 815M1560 230 1620 290" /></g>
      <g stroke="#444" strokeWidth="3" strokeDasharray="6 6" fill="none"><path d="M730 206 880 215M632 275Q690 260 752 268M402 370Q450 385 507 380M945 535 1010 505M1030 320 1090 370M1500 320 1530 370" /></g>
      {/* faults */}
      <g stroke="#333" strokeWidth="4" fill="none">
        <path d="M748 437Q690 440 660 470 620 500 570 488M890 580 860 640M925 675 980 760 1000 850M950 685 975 740 990 820M970 680 985 760M985 690 1010 790 1000 850M815 968 890 905 940 890M820 1017 890 880 900 850M940 1017 1020 935 1060 970M1060 985 1110 960 1170 900M1090 1017 1170 930 1170 905M805 680 815 750M892 858 1020 855M800 700 745 775 690 862M1005 850 1015 935" />
        <path d="M1140 410 1110 515M1375 12 1190 360 1110 515M1130 460H1250V650H1130V460M1357 325H1549V445H1357ZM1300 480 1600 300M1275 760 1350 640 1400 560 1440 520 1560 360M1250 290 1130 500M1620 290 1640 280 1635 420 1620 560 1600 700 1560 800 1500 920 1430 1017M1640 280V470L1625 620M1550 1017 1500 960 1560 840 1615 700M1715 205 1770 280 1800 310M1715 205 1640 280M1718 200 1740 160 1815 100V68M1825 128 1870 138 1908 135M1300 1000 1260 940 1200 990 1180 1017M1270 750 1370 640 1400 655M1345 720 1370 660 1420 650M1530 808 1515 760" />
        <path d="M1190 60 1210 75M1120 100 1100 140M1060 270 1075 290M1140 70 1165 90M1205 130 1190 150M1000 290 985 280M1240 40 1260 75M1350 235 1335 220M1425 610 1440 625M1780 540 1740 400M720 850 700 830M760 780 745 760M800 720 780 700M845 940 870 960" />
      </g>
      {/* Shetland and Orkney */}
      <g fill="#fff" stroke="#222" strokeWidth="3" strokeDasharray="7 2">
        <path d="M800 12 830 16 822 32 842 38 845 55 832 82 824 70 812 78 818 55 806 45ZM790 115 802 125 815 118 828 142 822 160 833 192 820 190 808 165 800 158 795 138ZM1690 375 1720 380 1712 395 1716 410 1700 424 1690 410ZM1655 415 1680 410 1672 440 1682 460 1675 480 1650 475 1660 450ZM1605 450 1618 445 1622 465 1635 460 1650 485 1642 505 1655 520 1640 550 1655 570 1646 590 1655 610 1640 640 1642 675 1625 670 1634 630 1624 600 1630 570 1612 555 1618 530 1602 512 1614 490ZM1580 530 1600 526 1615 550 1605 585 1590 570 1575 572ZM1690 440 1702 448 1715 445 1706 460 1694 458ZM1320 910 1345 900 1364 912 1372 935 1360 945 1350 975 1335 970 1318 950ZM1310 980 1335 972 1350 985 1360 1017 1325 1015ZM1360 850 1375 855 1390 846 1400 880 1386 890 1370 870ZM1415 900 1432 894 1450 905 1440 925 1425 916ZM1440 845 1470 830 1466 848 1450 865Z" />
        <path d="M1370 930 1386 938 1400 950 1392 970 1398 990 1385 995 1365 970ZM1395 870 1420 850 1415 880ZM1655 510 1690 500 1665 560ZM1660 580 1680 590 1665 605ZM1380 655 1410 650 1395 685ZM1510 565 1525 560 1515 600ZM826 95 832 100 828 106Z" />
      </g>
      {/* seismic profiles */}
      <g stroke="#2fb463" strokeWidth="4" fill="none"><path d="M920 137 1150 410M937 243 703 415M790 320 525 517M645 448 500 670M1115 298 1420 520M1240 150 1510 440M1320 85 1500 270M1310 73 1340 145M1475 12 1615 180M1600 12 1690 120M1795 12 1855 75M1590 325H1690L1715 290M1695 485 1770 465M1530 523H1610M1095 660 1165 740M1125 795 1265 975M1535 660 1610 740M1160 500 1140 600M1225 590 1280 660M1430 370 1510 440" /></g>
      {/* median line and blocks */}
      <path d={MEDIAN} fill="none" stroke="#f8e244" strokeWidth="12" />
      <path d={MEDIAN} fill="none" stroke="#333" strokeWidth="3" />
      <path d="M305 585 362 597M705 578 940 548 1110 515" stroke="#222" strokeWidth="6" fill="none" />
      <path d="M425 12 361 597 450 615 705 578 907 735V790L899 937 1057 943V1017M1945 12 1670 245 1683 542H1600L1350 1017" stroke="#f43a28" strokeWidth="6" fill="none" />
    </g>
    <path d={COAST} fill="none" stroke="#777" strokeWidth="3" />
    <g stroke="#333" strokeWidth="3"><path d="M455 208 517 260M640 165 682 192M725 295 798 262M405 555H372M462 585H508M603 620V578M693 645V602M575 698H540M873 750 830 740M738 530 722 508M955 445 940 404M700 775 730 805M1820 447H1778M1550 1004H1510M2006 65V25M1710 338H1682" /></g>
    {WELLS.map(([x, y], i) => <g key={i}><circle cx={x} cy={y} r="9.500" fill="#ee2d22" stroke="#7d1712" strokeWidth="3" /><circle cx={x} cy={y} r="3" fill="#300" /></g>)}
    <g fontFamily="Liberation Sans, sans-serif" fontSize="25" textAnchor="middle">
      {LABELS.map(([t, x, y, f, r], i) => <text key={i} fill={f} stroke={f} strokeWidth="0.800" fontStyle={f === R ? "italic" : undefined} fontWeight={f === R ? 700 : 400} transform={`translate(${x} ${y}) rotate(${r ?? 0})`} y="9">{t}</text>)}
    </g>
    <Target x={81} y={659} /><Target x={2307} y={659} />
  </svg>
);

/* ---------- parts ---------- */
const SelectField = ({ label, value, w }: { label: string; value: string; w: number }) => (
  <Field $w={w}>{label}<select defaultValue={value}><option>{value}</option></select><ChevronDown size={13} strokeWidth={2.500} /></Field>
);
const Node = ({ label, open, root, children }: { label: string; open?: boolean; root?: boolean; children?: React.ReactNode }) => (
  <li><TreeRow $root={root} aria-expanded={!!open}>{open ? <Minus size={12} viewBox="5 5 14 14" /> : <Plus size={12} viewBox="5 5 14 14" />}{label}</TreeRow>{children}</li>
);

export default function App() {
  return (
    <Shell>
      <Global />
      <TopBar>
        <Brand href="#"><Logo />Curate</Brand><AppName>Well Viewer</AppName>
        <TopActions>
          <button aria-label="Notifications"><Bell size={18} strokeWidth={1.500} /></button>
          <button aria-label="Help"><CircleHelp size={19} strokeWidth={1.600} /></button>
          <button aria-label="Account"><UserIcon /></button>
        </TopActions>
      </TopBar>
      <Body>
        <LeftPane>
          <PaneTitle>Document Preview</PaneTitle>
          <LeftBody>
            <Rail>
              <RailButton aria-label="Projects"><Briefcase /></RailButton>
              <RailButton aria-label="Wells"><Derrick /></RailButton>
              <RailButton aria-label="Data picker" $active><Database /></RailButton>
              <RailButton aria-label="Templates"><Template /></RailButton>
              <RailButton aria-label="Layers"><ListNodes /></RailButton>
              <RailButton aria-label="Markers"><TagM /></RailButton>
              <RailButton aria-label="Settings" $end><Gear s={21} /></RailButton>
            </Rail>
            <Picker>
              <PickerTitle>Data Picker</PickerTitle>
              <PickerTools>
                <SearchBox><Search size={17} strokeWidth={1.500} /><input placeholder="Search Data" aria-label="Search Data" /></SearchBox>
                <ToolRow><SortButton>Sort by Name<SortAZ /><ChevronDown size={13} strokeWidth={2.500} /></SortButton><GearButton aria-label="Picker settings"><Gear s={16} /></GearButton></ToolRow>
                <ToolRow><Toggle>Show only selected<input type="checkbox" role="switch" /></Toggle></ToolRow>
              </PickerTools>
              <Tree>
                <Node label="204/19- 2" open root>
                  <Branch $indent={16}>
                    <Node label="Core Measurements" /><Node label="Logs" />
                    <Node label="Markers" open><Branch $indent={13}><Node label="MD" /></Branch></Node>
                    <Node label="Pressure Sets" /><Node label="Z Conversion Data" />
                  </Branch>
                </Node>
              </Tree>
            </Picker>
          </LeftBody>
        </LeftPane>
        <Gutter $w={12} aria-label="Collapse left panel"><ChevronLeft size={12} /></Gutter>
        <Main>
          <Toolbar>
            <WellName><WellDot />204/19- 2</WellName>
            <ToolCell $w={38} $plain><button aria-label="AI search"><AiSearch /></button></ToolCell>
            <ToolCell $w={169} $spread><button aria-label="Single track"><SingleTrack /></button><button aria-label="Fit tracks"><FitTrack /></button><button aria-label="All tracks"><MultiTrack /></button></ToolCell>
            <ToolCell $w={160}><button><TableIcon />Manage Tracks</button></ToolCell>
            <ToolCell $w={168}><button><PictureIcon />Export to Image</button></ToolCell>
            <ToolCell $w={159}><SelectField label="Datum" value="MD" w={94} /></ToolCell>
            <ToolCell $w={141}><SelectField label="Unit" value="Feet" w={92} /></ToolCell>
            <ToolCell $w={187}><SelectField label="Scale" value="1:500" w={132} /></ToolCell>
          </Toolbar>
          <Workspace>
            <TracksPane>
              <Track $depth>
                <TrackHead /><DepthHead><span>{"MD\n(ft)"}</span><span>{"TWT\n(ms)"}</span></DepthHead><Band />
                <DepthPlot>
                  <rect x="44" width="2" height="100%" fill="#e2e6e0" />
                  {DEPTHS.map(([md, twt], i) => <g key={md} fill="#333"><text x="5" y={pct(GRID_Y[i])} dy="3">{md}</text><text x="50" y={pct(GRID_Y[i])} dy="3">{twt}</text></g>)}
                  <text x="0" y={pct(MARKER_Y)} dy="-1" fill="#f5a623" fontSize="9" fontWeight="400">T34.2 - T34.1</text>
                  <rect y={pct(MARKER_Y - 3)} width="100%" height="2" fill="#f5a623" opacity=".5" />
                </DepthPlot>
              </Track>
              {TRACKS.map(t => (
                <Track key={t.name}>
                  <TrackHead><Grip /><span>{t.name}</span></TrackHead>
                  <Legend>{t.key}<span>{t.legend}</span></Legend>
                  <Range>{t.lo}<i />{t.hi}</Range><Band />{t.plot}
                </Track>
              ))}
              <Strip /><ScrollTrack><i /></ScrollTrack>
            </TracksPane>
            <Gutter $w={14} aria-label="Collapse right panel"><ChevronRight size={12} /></Gutter>
            <RightPane>
              <PanelHead><DocTab>Well Documents Viewer</DocTab><FileName>Chapter_02_Faroe_Shetland.pdf</FileName><button aria-label="Close document"><X size={18} strokeWidth={1.500} /></button></PanelHead>
              <PdfBar>
                <PdfGroup $grow={340}>
                  <PdfButton aria-label="Sidebar"><SidebarIcon /></PdfButton>
                  <PdfGap />
                  <PdfButton aria-label="Find"><Search size={14} /></PdfButton>
                  <PdfButton aria-label="Previous page"><ChevronUp size={16} /></PdfButton><PdfSep /><PdfButton aria-label="Next page"><ChevronDown size={16} /></PdfButton>
                  <PageInput defaultValue="10" aria-label="Page" /><PageCount>(2 of 62)</PageCount>
                </PdfGroup>
                <PdfGroup>
                  <PdfButton aria-label="Zoom out"><Minus size={15} /></PdfButton><PdfSep /><PdfButton aria-label="Zoom in"><Plus size={15} /></PdfButton>
                  <ZoomField><select aria-label="Zoom" defaultValue="Automatic Zoom"><option>Automatic Zoom</option></select><ChevronDown size={13} /></ZoomField>
                </PdfGroup>
                <PdfGroup $grow={300} $end>
                  <PdfButton aria-label="Highlight"><Highlighter /></PdfButton><PdfButton aria-label="Text"><Type size={15} /></PdfButton><PdfButton aria-label="Draw"><Signature /></PdfButton><PdfButton aria-label="Image"><PictureIcon s={14} /></PdfButton>
                  <PdfSep $wide /><PdfButton aria-label="Print"><PrintIcon /></PdfButton><PdfButton aria-label="Save"><SaveIcon /></PdfButton><PdfSep $wide /><PdfButton aria-label="Tools"><ChevronsRight size={16} /></PdfButton>
                </PdfGroup>
              </PdfBar>
              <Viewport>
                <Page><GeoMap /></Page>
                <PageScroll><button aria-label="Scroll up"><ChevronUp size={12} strokeWidth={3} /></button><i /><button aria-label="Scroll down"><ChevronDown size={12} strokeWidth={3} /></button></PageScroll>
              </Viewport>
              <CrossHead><PlotTitle>Cross Plot</PlotTitle><HeadActions><button aria-label="Plot settings"><Gear s={18} /></button><button aria-label="Close plot"><X size={18} strokeWidth={1.500} /></button></HeadActions></CrossHead>
              <CrossPlot><CrossPlotChart /></CrossPlot>
            </RightPane>
          </Workspace>
        </Main>
      </Body>
      <Footer><button aria-label="Dismiss"><CircleX size={15} strokeWidth={1.300} /></button></Footer>
    </Shell>
  );
}
